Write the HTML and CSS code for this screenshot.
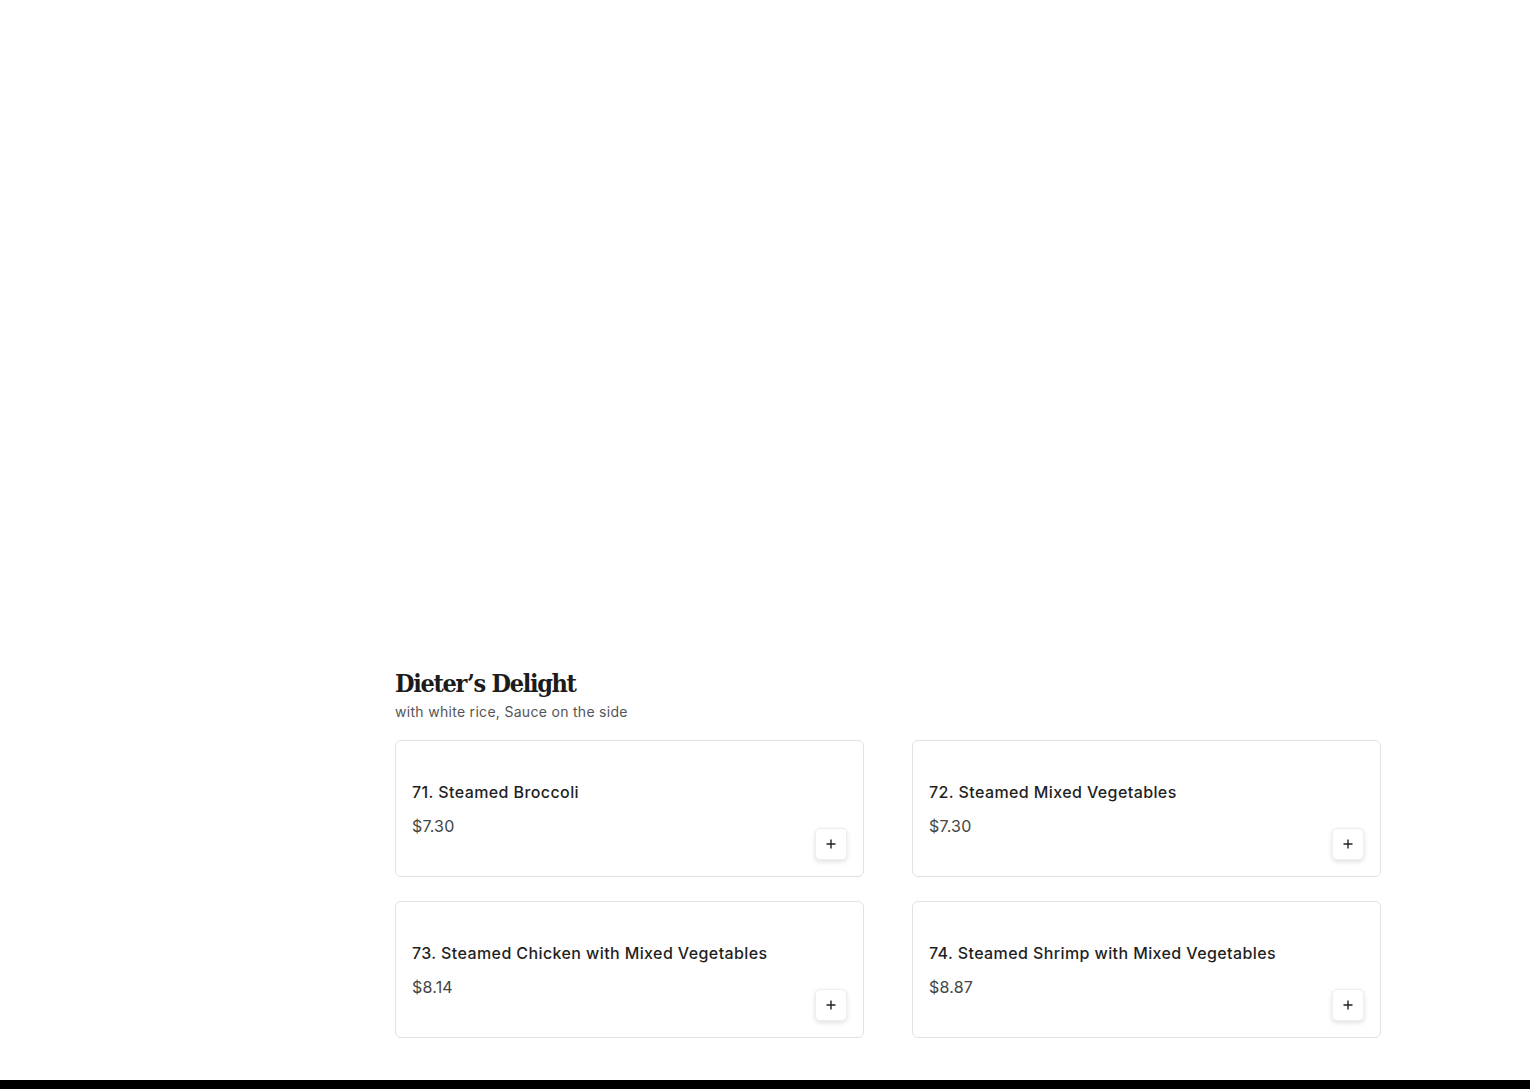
FILE: index.html
```html
<!DOCTYPE html>
<html lang="en">
<head>
    <title>Dieter's Delight</title>
    <link rel="stylesheet" href="styles.css">
</head>
<body>
    <!-- Empty hero area above the menu section -->
    <div class="hero"></div>

    <section class="menu">
        <h2 class="menu-title">Dieter’s Delight</h2>
        <p class="menu-note">with white rice, Sauce on the side</p>

        <div class="items">
            <div class="item">
                <div class="info">
                    <div class="name">71. Steamed Broccoli</div>
                    <div class="price">$7.30</div>
                </div>
                <button class="add" aria-label="Add">
                    <svg width="12" height="12" viewBox="0 0 12 12"><path d="M6 1.5v9M1.5 6h9" stroke="#222" stroke-width="1.4"/></svg>
                </button>
            </div>
            <div class="item">
                <div class="info">
                    <div class="name">72. Steamed Mixed Vegetables</div>
                    <div class="price">$7.30</div>
                </div>
                <button class="add" aria-label="Add">
                    <svg width="12" height="12" viewBox="0 0 12 12"><path d="M6 1.5v9M1.5 6h9" stroke="#222" stroke-width="1.4"/></svg>
                </button>
            </div>
            <div class="item">
                <div class="info">
                    <div class="name">73. Steamed Chicken with Mixed Vegetables</div>
                    <div class="price">$8.14</div>
                </div>
                <button class="add" aria-label="Add">
                    <svg width="12" height="12" viewBox="0 0 12 12"><path d="M6 1.5v9M1.5 6h9" stroke="#222" stroke-width="1.4"/></svg>
                </button>
            </div>
            <div class="item">
                <div class="info">
                    <div class="name">74. Steamed Shrimp with Mixed Vegetables</div>
                    <div class="price">$8.87</div>
                </div>
                <button class="add" aria-label="Add">
                    <svg width="12" height="12" viewBox="0 0 12 12"><path d="M6 1.5v9M1.5 6h9" stroke="#222" stroke-width="1.4"/></svg>
                </button>
            </div>
        </div>
    </section>

    <footer class="footer"></footer>
</body>
</html>
```

FILE: styles.css
```css
body {
    margin: 0;
    background-color: #fff;
    font-family: Inter, 'Open Sans', sans-serif;
    color: #222;
}

/* Blank space where the page's banner would sit */
.hero {
    height: 668px;
}

/* Menu section */
.menu {
    width: 986px;
    margin: 0 0 0 395px;
    padding-bottom: 42px;
}

.menu-title {
    margin: 0;
    font-family: 'DejaVu Serif Condensed', 'DejaVu Serif', serif;
    font-weight: bold;
    font-size: 25px;
    line-height: 32px;
    letter-spacing: -1.3px;
    color: #1c1c1c;
}

.menu-note {
    margin: 0 0 16px;
    font-size: 14px;
    line-height: 24px;
    letter-spacing: 0.3px;
    color: #555;
}

/* Two column grid of dishes */
.items {
    display: grid;
    grid-template-columns: 1fr 1fr;
    column-gap: 48px;
    row-gap: 24px;
}

.item {
    display: flex;
    height: 137px;
    box-sizing: border-box;
    padding: 16px;
    border: 1px solid #e2e2e2;
    border-radius: 6px;
    background-color: #fff;
}

.info {
    flex: 1;
    align-self: center;
}

.name {
    font-size: 16px;
    font-weight: 500;
    line-height: 24px;
    letter-spacing: 0.4px;
    color: #1f1f1f;
}

.price {
    margin-top: 10px;
    font-size: 16px;
    line-height: 24px;
    letter-spacing: 0.2px;
    color: #444;
}

.add {
    align-self: flex-end;
    width: 32px;
    height: 32px;
    padding: 0;
    display: flex;
    align-items: center;
    justify-content: center;
    border: 1px solid #eee;
    border-radius: 5px;
    background-color: #fff;
    box-shadow: 0 2px 5px rgba(0, 0, 0, 0.12);
    cursor: pointer;
}

.footer {
    height: 300px;
    background-color: #000;
}
```
